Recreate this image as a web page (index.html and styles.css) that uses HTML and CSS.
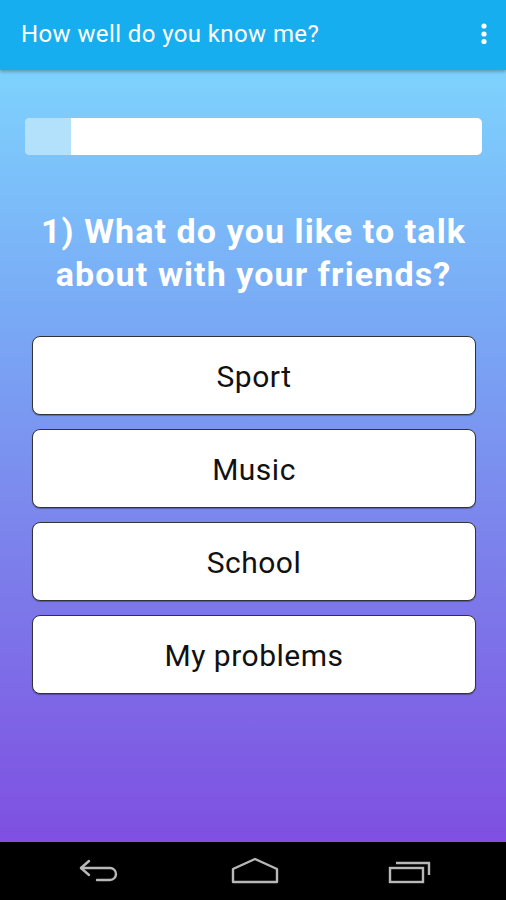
FILE: index.html
```html
<!DOCTYPE html>
<html lang="en">
<head>
  <meta charset="UTF-8">
  <meta name="viewport" content="width=device-width, initial-scale=1.0">
  <title>How well do you know me?</title>
  <link rel="stylesheet" href="styles.css">
</head>
<body>
  <div class="app">
    <header class="app-bar">
      <span class="app-title">How well do you know me?</span>
      <svg class="overflow" width="8" height="24" viewBox="0 0 8 24">
        <circle cx="4" cy="4" r="2.6" fill="#fff"/>
        <circle cx="4" cy="12" r="2.6" fill="#fff"/>
        <circle cx="4" cy="19.5" r="2.6" fill="#fff"/>
      </svg>
    </header>

    <main class="quiz">
      <div class="progress">
        <div class="progress-fill" style="width: 10%"></div>
      </div>

      <h1 class="question">1) What do you like to talk about with your friends?</h1>

      <div class="answers">
        <button class="answer">Sport</button>
        <button class="answer">Music</button>
        <button class="answer">School</button>
        <button class="answer">My problems</button>
      </div>
    </main>

    <nav class="nav-bar">
      <!-- back -->
      <svg width="46" height="30" viewBox="0 0 46 30">
        <path d="M12 5 L4 12 L12 19" fill="none" stroke="#b8b8b8" stroke-width="2.4" stroke-linejoin="round" stroke-linecap="round"/>
        <path d="M4 12 H33 a6 6 0 0 1 0 12 H20" fill="none" stroke="#b8b8b8" stroke-width="2.4" stroke-linecap="round"/>
      </svg>
      <!-- home -->
      <svg width="50" height="30" viewBox="0 0 50 30">
        <path d="M3 13 L25 3 L47 13 V26 H3 Z" fill="none" stroke="#b8b8b8" stroke-width="2.4" stroke-linejoin="round"/>
      </svg>
      <!-- recents -->
      <svg width="46" height="30" viewBox="0 0 46 30">
        <rect x="3" y="12" width="33" height="14" fill="none" stroke="#b8b8b8" stroke-width="2.4"/>
        <path d="M9 7 H42 V19" fill="none" stroke="#b8b8b8" stroke-width="2.4"/>
      </svg>
    </nav>
  </div>
</body>
</html>
```

FILE: styles.css
```css
body {
  margin: 0;
  font-family: Roboto, "Noto Sans", Arial, sans-serif;
}

.app {
  width: 506px;
  height: 900px;
  display: flex;
  flex-direction: column;
  overflow: hidden;
}

.app-bar {
  height: 70px;
  flex: none;
  background-color: #17aef0;
  display: flex;
  align-items: center;
  justify-content: space-between;
  padding: 0 18px 0 21px;
  box-shadow: 0 2px 3px rgba(0, 0, 0, 0.25);
  position: relative;
  z-index: 1;
  box-sizing: border-box;
}

.app-title {
  color: #fff;
  font-size: 24px;
  letter-spacing: 0.4px;
  margin-top: -2px;
}

.overflow {
  margin-top: -2px;
}

.quiz {
  flex: 1;
  background: linear-gradient(to bottom, #7ed2fd 0%, #79a8f5 33%, #7c84ec 60%, #7f4fe1 100%);
  padding: 48px 24px 0 25px;
  box-sizing: border-box;
}

.progress {
  height: 37px;
  background-color: #fff;
  border-radius: 5px;
  overflow: hidden;
}

.progress-fill {
  height: 100%;
  background-color: #b3e1fc;
}

.question {
  color: #fff;
  font-size: 34px;
  font-weight: bold;
  letter-spacing: 1.1px;
  text-align: center;
  line-height: 43px;
  margin: 55px -10px 40px;
}

.answers {
  display: flex;
  flex-direction: column;
  gap: 14px;
  padding: 0 6px 0 7px;
}

.answer {
  height: 79px;
  background-color: #fff;
  border: 1px solid #333;
  border-radius: 8px;
  font-family: Roboto, "Noto Sans", Arial, sans-serif;
  font-size: 30px;
  letter-spacing: 0.5px;
  color: #111;
  padding: 2px 0 0;
  box-shadow: 0 1px 1px rgba(0, 0, 0, 0.3);
}

.nav-bar {
  height: 58px;
  flex: none;
  background-color: #000;
  display: flex;
  align-items: center;
  justify-content: space-between;
  padding: 0 73px 0 77px;
}
```
